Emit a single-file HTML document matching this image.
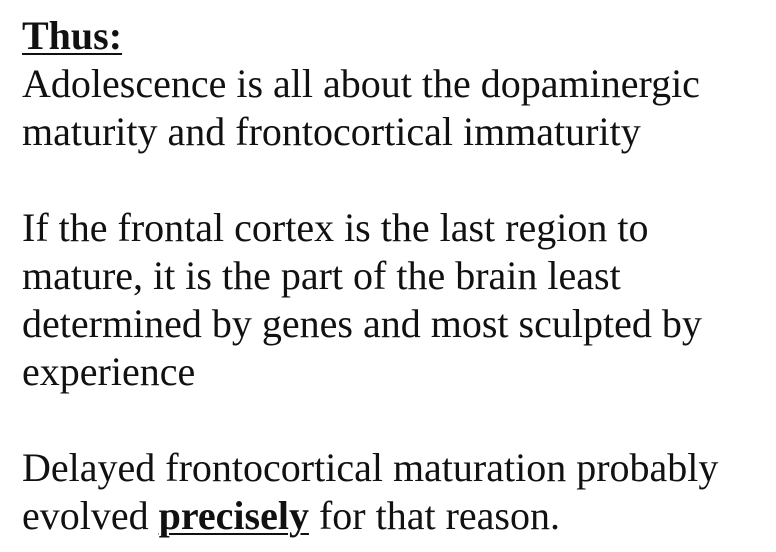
<!DOCTYPE html>
<html><head><style>
html,body{margin:0;padding:0;background:#fff;width:776px;height:552px;overflow:hidden}
.t{position:absolute;left:22px;top:12px;font-family:"Liberation Serif",serif;font-size:40px;line-height:48px;color:#111;white-space:nowrap}
u{text-decoration-thickness:2px;text-underline-offset:4px}
</style></head><body>
<div class="t"><b><u>Thus:</u></b><br>Adolescence is all about the dopaminergic<br>maturity and frontocortical immaturity<br><br>If the frontal cortex is the last region to<br>mature, it is the part of the brain least<br>determined by genes and most sculpted by<br>experience<br><br>Delayed frontocortical maturation probably<br>evolved <b><u>precisely</u></b> for that reason.</div>
</body></html>
